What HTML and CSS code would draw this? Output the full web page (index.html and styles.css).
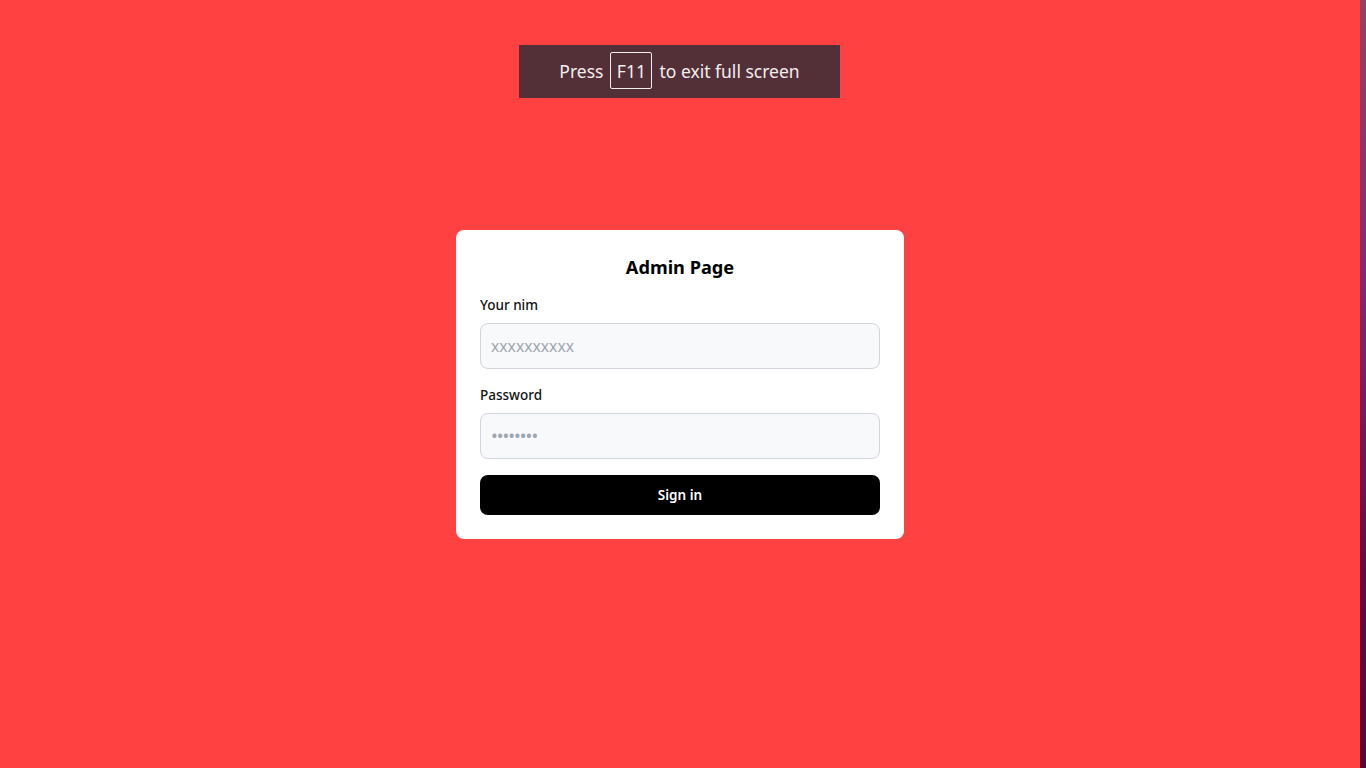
FILE: index.html
```html
<!DOCTYPE html>
<html lang="en">
<head>
<meta charset="utf-8">
<title>Admin Page</title>
<link rel="stylesheet" href="styles.css">
</head>
<body>
<div class="page">
  <main class="stage">
    <div class="toast">Press <span class="key">F11</span> to exit full screen</div>
    <section class="card">
      <h1 class="title">Admin Page</h1>
      <form class="form">
        <div class="field">
          <label class="label" for="nim">Your nim</label>
          <input class="input" id="nim" type="text" placeholder="xxxxxxxxxx">
        </div>
        <div class="field">
          <label class="label" for="pw">Password</label>
          <input class="input input-pw" id="pw" type="password" placeholder="••••••••">
        </div>
        <button class="btn" type="button">Sign in</button>
      </form>
    </section>
  </main>
  <div class="edge"></div>
</div>
</body>
</html>
```
FILE: styles.css
```css
* { box-sizing: border-box; }
html, body { margin: 0; padding: 0; height: 100%; }
body {
  font-family: "Noto Sans", "Open Sans", sans-serif;
  background: #ff4141;
}
.page {
  display: flex;
  height: 768px;
}
.stage {
  position: relative;
  flex: 1;
  display: flex;
  align-items: center;
  justify-content: center;
}
.edge {
  width: 6px;
  background: linear-gradient(180deg, #8d4468 0%, #7c2c7a 35%, #5a0d4a 75%, #4e0a3e 100%);
}
.toast {
  position: absolute;
  top: 45px;
  left: 519px;
  width: 321px;
  height: 53px;
  padding-bottom: 2px;
  background: #533037;
  color: #f2eeee;
  font-size: 17.5px;
  display: flex;
  align-items: center;
  justify-content: center;
  gap: 7px;
}
.key {
  display: inline-flex;
  align-items: center;
  justify-content: center;
  width: 42px;
  height: 37px;
  border: 1px solid #f2eeee;
  border-radius: 2px;
}
.card {
  width: 448px;
  background: #fff;
  border-radius: 8px;
  padding: 24px;
}
.title {
  margin: 0;
  text-align: center;
  font-size: 18.2px;
  line-height: 26px;
  font-weight: 700;
  color: #000;
}
.form {
  margin-top: 15px;
  display: flex;
  flex-direction: column;
  gap: 16px;
}
.field { display: flex; flex-direction: column; }
.label {
  font-size: 13.5px;
  line-height: 20px;
  font-weight: 500;
  color: #111;
  margin-bottom: 8px;
}
.input {
  height: 46px;
  width: 100%;
  border: 1px solid #d1d5db;
  border-radius: 8px;
  background: #f8f9fb;
  padding: 0 10px;
  font-family: inherit;
  font-size: 15.7px;
  color: #111;
  outline: none;
}
.input::placeholder { color: #a0a6b1; }
.input-pw::placeholder { font-size: 18px; letter-spacing: -1px; }
.btn {
  height: 40px;
  border: none;
  border-radius: 8px;
  background: #000;
  color: #fff;
  font-family: inherit;
  font-size: 13.5px;
  font-weight: 600;
}
```
